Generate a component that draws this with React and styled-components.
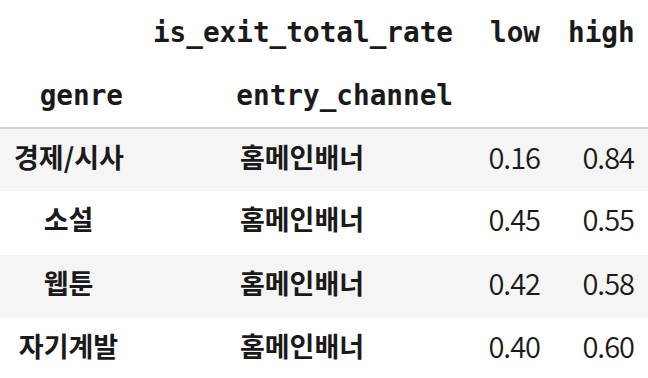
import React from 'react';
import styled, { createGlobalStyle } from 'styled-components';

const GlobalStyle = createGlobalStyle`
  html, body {
    margin: 0;
    padding: 0;
    background: #ffffff;
  }
`

// dataframe table
const Frame = styled.table`
  width: 648px;
  border-collapse: collapse;
  border-spacing: 0;
  table-layout: fixed;
  color: #1a1a1a;
`

const HeadRow = styled.tr`
  height: 64px;
  border-bottom: ${props => (props.last ? '2px solid #d0d0d0' : 'none')};
`

const BodyRow = styled.tr`
  height: 63.3px;
  background-color: ${props => (props.striped ? '#f5f5f5' : '#ffffff')};
`

const HeadCell = styled.th`
  padding: 0 14px;
  text-align: right;
  vertical-align: middle;
  font-family: "DejaVu Sans Mono", "Noto Sans CJK KR", monospace;
  font-weight: bold;
  font-size: 27.7px;
  white-space: nowrap;
`

const IndexCell = styled.th`
  padding: 0 14px 8px;
  text-align: center;
  vertical-align: middle;
  font-family: "Noto Sans CJK KR", sans-serif;
  font-weight: bold;
  font-size: 27px;
  white-space: nowrap;
`

const ValueCell = styled.td`
  padding: 0 14px 9px 14px;
  text-align: right;
  vertical-align: middle;
  font-family: "Noto Sans CJK KR", sans-serif;
  font-weight: 350;
  font-size: 29px;
  letter-spacing: -1px;
  white-space: nowrap;
`

const rows = [
  { genre: '경제/시사', channel: '홈메인배너', low: '0.16', high: '0.84' },
  { genre: '소설', channel: '홈메인배너', low: '0.45', high: '0.55' },
  { genre: '웹툰', channel: '홈메인배너', low: '0.42', high: '0.58' },
  { genre: '자기계발', channel: '홈메인배너', low: '0.40', high: '0.60' },
];

const App = () => {
  return (
    <>
      <GlobalStyle />
      <Frame>
        <colgroup>
          <col style={{ width: 137 }} />
          <col style={{ width: 330 }} />
          <col style={{ width: 87 }} />
          <col style={{ width: 94 }} />
        </colgroup>
        <thead>
          <HeadRow>
            <HeadCell></HeadCell>
            <HeadCell>is_exit_total_rate</HeadCell>
            <HeadCell>low</HeadCell>
            <HeadCell>high</HeadCell>
          </HeadRow>
          <HeadRow last>
            <HeadCell>genre</HeadCell>
            <HeadCell>entry_channel</HeadCell>
            <HeadCell></HeadCell>
            <HeadCell></HeadCell>
          </HeadRow>
        </thead>
        <tbody>
          {rows.map((r, i) => (
            <BodyRow key={r.genre} striped={i % 2 === 0}>
              <IndexCell>{r.genre}</IndexCell>
              <IndexCell>{r.channel}</IndexCell>
              <ValueCell>{r.low}</ValueCell>
              <ValueCell>{r.high}</ValueCell>
            </BodyRow>
          ))}
        </tbody>
      </Frame>
    </>
  );
};

export default App;
